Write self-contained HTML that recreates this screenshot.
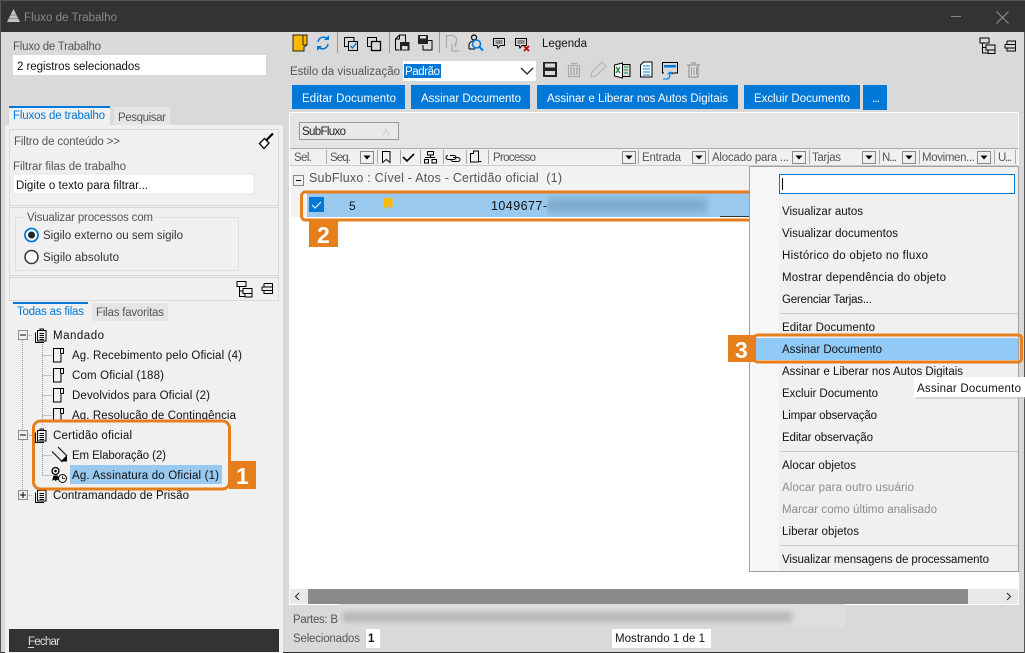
<!DOCTYPE html>
<html lang="pt"><head><meta charset="utf-8"><title>Fluxo de Trabalho</title>
<style>
html,body{margin:0;padding:0;background:#d9d9d9;overflow:hidden}
svg{display:block}
text{font-family:"Liberation Sans",sans-serif;font-size:11.5px;fill:#111;white-space:pre}
.g{fill:#555}.b{fill:#0078d7}.w{fill:#fff}.d{fill:#8c8c8c}
.i{fill:none;stroke:#000;stroke-width:1}
.dot{stroke:#999;stroke-dasharray:1 1;stroke-width:1;fill:none}
.sep{stroke:#aaa;stroke-width:1}
.dd{fill:#f0f0f0;stroke:#888;stroke-width:1}
.o{fill:none;stroke:#e67e1c;stroke-width:3}
.n{font-size:23px;font-weight:bold;fill:#fff}
</style></head><body>
<svg width="1025" height="653" viewBox="0 0 1025 653" xmlns="http://www.w3.org/2000/svg">
<defs>
<filter id="bl" x="-5%" y="-60%" width="110%" height="220%"><feGaussianBlur stdDeviation="3.5"/></filter>
<clipPath id="rowc"><rect x="547" y="193" width="173" height="24"/></clipPath>
<clipPath id="footc"><rect x="339" y="604" width="506" height="23"/></clipPath>
<g id="clip"><path class="i" d="M2.500 2.500h8.500v10.500h-8.500zM5 2.500v-1.500h3.500v1.500M4.500 5.500h4.500M4.500 7.500h4.500M4.500 9.500h4.500M4.500 11.500h4.500M.5 4.500v10h8.500"/></g>
<g id="page"><path class="i" d="M.5.5h10v5h-2.500v8.500h-7.500zM7.500 .5v5"/></g>
<g id="tree"><path class="i" d="M.5.5h9v5h-9zM3 5.500v10.500M3 10h4M3 15.500h5M6.500 7.500h9v5h-9zM8.500 12.500v3.500h7v-3.500"/></g>
<g id="coll"><path class="i" d="M2.500.5h8.500v10h-8.500v-3M.5 4h10.500M.5 4v3.500h10.500M2.500 .5v3.500"/></g>
<g id="dda"><path d="M0 0h7l-3.500 4z" fill="#000"/></g>
</defs>

<rect width="1025" height="653" fill="#d9d9d9"/>
<rect width="1025" height="32" fill="#333"/>
<rect width="1025" height="1" fill="#555"/>
<rect y="652" width="1025" height="1" fill="#333"/>
<rect width="1" height="653" fill="#555"/><rect x="1024" y="32" width="1" height="621" fill="#555"/>

<!-- title -->
<path d="M13.500 9l6.500 13h-13z" fill="#c4c4c4"/><path d="M9 18.500h9M10.500 15h6" stroke="#555" stroke-width=".5" fill="none"/>
<text x="24" y="21" textLength="93" style="fill:#8a8a8a">Fluxo de Trabalho</text>
<rect x="951" y="16" width="10" height="1" fill="#888"/>
<path d="M996.500 11.500l12 12M1008.500 11.500l-12 12" stroke="#888" stroke-width="1.200"/>

<!-- left top -->
<text class="g" x="13" y="50" textLength="88">Fluxo de Trabalho</text>
<rect x="13" y="55" width="253" height="20" fill="#fff"/>
<text x="17" y="70" textLength="123">2 registros selecionados</text>

<!-- left tabs -->
<rect x="5" y="125" width="278" height="528" fill="#f0f0f0"/>
<rect x="9" y="106" width="101" height="19" fill="#f0f0f0"/>
<rect x="9" y="106" width="101" height="2" fill="#0078d7"/>
<text class="b" x="13" y="119" textLength="92">Fluxos de trabalho</text>
<rect x="114" y="107" width="56" height="18" fill="#e5e5e5"/>
<text class="g" x="118" y="121" textLength="48">Pesquisar</text>

<rect x="9.500" y="129.500" width="269" height="76" fill="none" stroke="#d9d9d9"/>
<text class="g" x="14" y="145" textLength="106">Filtro de conteúdo &gt;&gt;</text>
<path d="M259.500 143.500l5-5 4.500 4.500-5 5.500z" fill="#fff" stroke="#000" stroke-width="1.300"/>
<path d="M266 140.500l7-7" stroke="#000" stroke-width="2.200"/>
<text class="g" x="13" y="170" textLength="113">Filtrar filas de trabalho</text>
<rect x="13" y="174" width="241" height="20" fill="#fff" stroke="#e6e6e6"/>
<text x="16" y="189" textLength="132">Digite o texto para filtrar...</text>

<rect x="9.500" y="207.500" width="269" height="68" fill="none" stroke="#d9d9d9"/>
<rect x="15.500" y="217.500" width="223" height="53" fill="none" stroke="#e0e0e0"/>
<rect x="25" y="212" width="130" height="10" fill="#f0f0f0"/>
<text class="g" x="27" y="221" textLength="126">Visualizar processos com</text>
<circle cx="31.500" cy="235" r="6.500" fill="#fff" stroke="#0078d7" stroke-width="1.800"/>
<circle cx="31.500" cy="235" r="3.500" fill="#222"/>
<text x="43" y="239" textLength="140" style="fill:#333">Sigilo externo ou sem sigilo</text>
<circle cx="31.500" cy="257" r="6.500" fill="#fff" stroke="#333" stroke-width="1.500"/>
<text x="43" y="261" textLength="76" style="fill:#333">Sigilo absoluto</text>

<rect x="9.500" y="277.500" width="269" height="23" fill="none" stroke="#d9d9d9"/>
<use href="#tree" x="236.500" y="281"/>
<use href="#coll" x="261.500" y="283"/>

<rect x="13" y="302" width="75" height="2" fill="#0078d7"/>
<text class="b" x="17" y="315" textLength="67">Todas as filas</text>
<rect x="92" y="303" width="76" height="18" fill="#e5e5e5"/>
<text class="g" x="96" y="316" textLength="68">Filas favoritas</text>

<!-- tree -->
<path class="dot" d="M22.500 340v150M42.500 340v85M42.500 440v35M42.500 355.500h9M42.500 375.500h9M42.500 395.500h9M42.500 415.500h9M42.500 455.500h9M42.500 475.500h9M27 335.500h6M27 435.500h6M27 495.500h6"/>
<rect x="18.500" y="330.500" width="9" height="9" fill="#f0f0f0" stroke="#888"/><path d="M20 335h6" stroke="#000"/>
<use href="#clip" x="35" y="328"/>
<text x="53" y="339" textLength="51">Mandado</text>
<use href="#page" x="53" y="348"/><text x="72" y="359" textLength="170">Ag. Recebimento pelo Oficial (4)</text>
<use href="#page" x="53" y="368"/><text x="72" y="379" textLength="92">Com Oficial (188)</text>
<use href="#page" x="53" y="388"/><text x="72" y="399" textLength="138">Devolvidos para Oficial (2)</text>
<use href="#page" x="53" y="408"/><text x="72" y="419" textLength="164">Ag. Resolução de Contingência</text>

<rect x="18.500" y="430.500" width="9" height="9" fill="#f0f0f0" stroke="#888"/><path d="M20 435h6" stroke="#000"/>
<use href="#clip" x="35" y="428"/>
<text x="53" y="439" textLength="79">Certidão oficial</text>
<path d="M52 451.500l10.500 10.500M58 447l9 9" fill="none" stroke="#000" stroke-width="1"/><path d="M60.500 461.500l6.500-6.500v6.500z" fill="#000"/>
<text x="72" y="459" textLength="94">Em Elaboração (2)</text>
<circle cx="55.500" cy="471" r="3.500" fill="none" stroke="#000" stroke-width="1.300"/><circle cx="55.500" cy="471" r="1.300"/><path d="M52 481l1.500-5.500h4l2 5.500-2-1.500-2 1.500-1.500-1.500z" fill="#000"/>
<circle cx="62.500" cy="478.500" r="4" fill="#f0f0f0" stroke="#000"/><path d="M62.500 476v2.500h2.500" fill="none" stroke="#000" stroke-width=".8"/>
<rect x="70" y="465" width="152" height="19" fill="#99c9ef"/>
<text x="72" y="479" textLength="147">Ag. Assinatura do Oficial (1)</text>

<rect x="18.500" y="490.500" width="9" height="9" fill="#f0f0f0" stroke="#888"/><path d="M20 495h6M23 492v6" stroke="#000"/>
<use href="#clip" x="35" y="488"/>
<text x="53" y="499" textLength="136">Contramandado de Prisão</text>

<rect x="33.500" y="421" width="196" height="68" rx="7" class="o"/>
<rect x="229" y="461" width="27" height="28" fill="#e67e1c"/>
<text class="n" x="236" y="484">1</text>

<rect x="9" y="629" width="270" height="23" fill="#333"/>
<text x="28" y="645" textLength="32" style="fill:#ddd">Fechar</text><rect x="28" y="647" width="6" height="1" fill="#ddd"/>

<!-- toolbar -->
<path d="M293 35h14v10l-3 2v4h-11z" fill="#fdb900" stroke="#222"/>
<path d="M303 35v10h4" fill="none" stroke="#222"/>
<path d="M318 42a5.500 5.500 0 0 1 9-3.500M328 44a5.500 5.500 0 0 1-9 3.500" fill="none" stroke="#0078d7" stroke-width="1.500"/>
<path d="M329 35v5h-5zM317 51v-5h5z" fill="#0078d7"/>
<rect x="337" y="32" width="1" height="21" fill="#999"/>
<path class="i" d="M344.500 37.500h9.500v4M348 46.500h-3.500v-9"/>
<rect x="348.500" y="41.500" width="9" height="9" fill="none" stroke="#000"/>
<path d="M350.500 46l2 2 4-5" fill="none" stroke="#0078d7" stroke-width="1.400"/>
<path class="i" d="M371.500 46.500h-4v-9h9v4"/><rect x="371.500" y="41.500" width="9" height="9" fill="none" stroke="#000" stroke-width="1.300"/>
<rect x="389" y="32" width="1" height="21" fill="#999"/>
<path class="i" d="M395.500 50v-11l4-4h6v7M399.500 35v4h-4M395.500 50h4" stroke-width="1.100"/><rect x="400" y="42" width="9.500" height="8.500" fill="#222"/><rect x="402" y="46" width="5.500" height="3.500" fill="#ddd"/>
<path class="i" d="M428 40.500h4v9.500h-9v-5" stroke-width="1.100"/><rect x="418" y="35" width="10" height="9" fill="#222"/><rect x="420" y="36" width="6" height="2.500" fill="#ddd"/>
<rect x="439" y="32" width="1" height="21" fill="#999"/>
<path d="M446.500 47.500v-12h7l3 3v5M452 44v7h7M455.500 47v-5" fill="none" stroke="#aaa" stroke-width="1.200"/>
<circle cx="474" cy="37.500" r="2.500" fill="none" stroke="#000" stroke-width="1.200"/><path class="i" d="M469 49v-4a5 4 0 0 1 5-4M469 49h6"/>
<circle cx="476.500" cy="44" r="4" fill="#d9d9d9" stroke="#0078d7" stroke-width="1.500"/><path d="M479.500 47l3.500 3.500" stroke="#0078d7" stroke-width="2"/>
<path class="i" d="M493.500 38.500h11v7h-4.500l-2 2.500-1-2.500h-3.500z"/><path d="M495.500 41h7M495.500 43h7" stroke="#000" stroke-width=".8"/>
<path class="i" d="M515.500 38.500h11v7h-4.500l-2 2.500-1-2.500h-3.500z"/><path d="M517.500 41h7M517.500 43h7" stroke="#000" stroke-width=".8"/>
<path d="M524 46l5 5M529 46l-5 5" stroke="#c00" stroke-width="1.800"/>
<text x="542" y="47" textLength="45">Legenda</text>

<use href="#tree" x="979.500" y="37.500"/>
<use href="#coll" x="1004.500" y="40.500"/>

<!-- style row -->
<text class="g" x="290" y="75" textLength="110">Estilo da visualização</text>
<rect x="403" y="61" width="133" height="20" fill="#fff"/>
<rect x="404" y="64" width="37" height="14" fill="#0078d7"/>
<text class="w" x="405" y="75" textLength="35">Padrão</text>
<path d="M521 68l6 6 6-6" fill="none" stroke="#222" stroke-width="1.300"/>
<rect x="543" y="62" width="14" height="15" fill="#222"/><rect x="545" y="63.500" width="10" height="4" fill="#d9d9d9"/><rect x="545" y="71" width="10" height="4" fill="#d9d9d9"/>
<path d="M568.500 65.500h11v11h-11zM571 63.500h6" fill="none" stroke="#aaa" stroke-width="1.200"/><path d="M571 67v8M574 67v8M577 67v8" stroke="#aaa" stroke-width="1.500"/>
<path d="M592 72l10-10 4 4-10 10-5 1z" fill="none" stroke="#b5b5b5" stroke-width="1.200"/>
<path class="i" d="M622 64.500h8v12h-8"/><path d="M624 67h4M624 70h4M624 73h4" stroke="#1a8f3c"/>
<path d="M614.500 65l8-2v15l-8-2z" fill="#fff" stroke="#000"/><path d="M616 67l4 6M620 67l-4 6" stroke="#1a8f3c" stroke-width="1.400"/>
<path d="M640.500 65l3-3h8.500v15h-11.500z" fill="#fff" stroke="#000"/><path d="M643 66h7M643 69h7M643 72h7M643 75h7" stroke="#0078d7"/>
<path class="i" d="M664 73h-1.500v-10.500h15v10.500h-8"/><rect x="664" y="65" width="12" height="2.500" fill="#0078d7"/><path d="M663 79h4c2 0 3-2 3-6M667.500 74.500l2.500-2.500 2.500 2.500" fill="none" stroke="#0078d7" stroke-width="1.100"/>
<path d="M687 65h13M689 65v12h9v-12M691 63h5" fill="#e0e0e0" stroke="#999" stroke-width="1.300"/><path d="M691.500 67v8M694 67v8M696.500 67v8" stroke="#999"/>

<!-- action buttons -->
<g fill="#0078d7"><rect x="292" y="85" width="113" height="24"/><rect x="411" y="85" width="119" height="24"/><rect x="537" y="85" width="201" height="24"/><rect x="744" y="85" width="116" height="24"/><rect x="863" y="85" width="24" height="25"/></g>
<text class="w" x="302" y="102" textLength="94">Editar Documento</text>
<text class="w" x="421" y="102" textLength="100">Assinar Documento</text>
<text class="w" x="547" y="102" textLength="181">Assinar e Liberar nos Autos Digitais</text>
<text class="w" x="754" y="102" textLength="96">Excluir Documento</text>
<text class="w" x="872" y="102" textLength="8">...</text>

<!-- grid -->
<rect x="289" y="112" width="730" height="493" fill="#fff"/>
<rect x="290" y="113" width="728" height="35" fill="#e5e5e3"/>
<rect x="299.500" y="122.500" width="99" height="17" fill="#e9e9e7" stroke="#999"/>
<text x="302" y="135" textLength="44" style="fill:#222">SubFluxo</text>
<path d="M383 135l3-5 3 5" fill="none" stroke="#ccc"/>
<rect x="290" y="148" width="728" height="1" fill="#aaa"/>
<rect x="290" y="149" width="728" height="16" fill="#f0f0f0"/>
<rect x="290" y="165" width="728" height="1" fill="#ccc"/>
<path class="sep" d="M326.500 150v14M377.500 150v14M400.500 150v14M420.500 150v14M443.500 150v14M466.500 150v14M488.500 150v14M638.500 150v14M708.500 150v14M809.500 150v14M879.500 150v14M919.500 150v14M994.500 150v14M1015.500 150v14"/>
<text class="g" x="294" y="161" textLength="18">Sel.</text>
<text class="g" x="330" y="161" textLength="21">Seq.</text>
<text class="g" x="493" y="161" textLength="43">Processo</text>
<text class="g" x="642" y="161" textLength="39">Entrada</text>
<text class="g" x="712" y="161" textLength="77">Alocado para ...</text>
<text class="g" x="812" y="161" textLength="29">Tarjas</text>
<text class="g" x="882" y="161" textLength="15">N...</text>
<text class="g" x="922" y="161" textLength="53">Movimen...</text>
<text class="g" x="998" y="161" textLength="14">U...</text>
<g>
<rect class="dd" x="360.500" y="151.500" width="13" height="12"/><use href="#dda" x="363.500" y="155.500"/>
<rect class="dd" x="622.500" y="151.500" width="13" height="12"/><use href="#dda" x="625.500" y="155.500"/>
<rect class="dd" x="692.500" y="151.500" width="13" height="12"/><use href="#dda" x="695.500" y="155.500"/>
<rect class="dd" x="792.500" y="151.500" width="13" height="12"/><use href="#dda" x="795.500" y="155.500"/>
<rect class="dd" x="862.500" y="151.500" width="13" height="12"/><use href="#dda" x="865.500" y="155.500"/>
<rect class="dd" x="902.500" y="151.500" width="13" height="12"/><use href="#dda" x="905.500" y="155.500"/>
<rect class="dd" x="977.500" y="151.500" width="13" height="12"/><use href="#dda" x="980.500" y="155.500"/>
</g>
<path class="i" d="M382.500 151.500h7.500v11l-3.750-3-3.750 3z"/>
<path d="M403 157l4 4 7-7" fill="none" stroke="#000" stroke-width="1.600"/>
<path class="i" d="M427.500 151.500h6v3.500h-6zM430.500 155v2.500M425 157.500h10M424.500 159.500h4v3.500h-4zM432 159.500h4.500v3.500h-4.500z"/>
<path class="i" d="M450 155.500h4a2 2 0 0 1 0 4h-6a2 2 0 0 1 0-4M453 157.500h5a2 2 0 0 1 0 4h-5a2 2 0 0 1-2-2"/>
<path class="i" d="M470.500 153.500h3v-2.500h5v11h-8zM478.500 161.500h3"/>

<rect x="291" y="166" width="458" height="51" fill="#f2f2f2"/>
<rect x="293.500" y="175.500" width="10" height="10" fill="#f0f0f0" stroke="#888"/><path d="M296 180.500h5" stroke="#000"/>
<text class="g" x="309" y="182" textLength="253" style="font-size:12.500px">SubFluxo : Cível - Atos - Certidão oficial  (1)</text>
<rect x="307" y="193" width="443" height="24" fill="#99c9ef"/>
<rect x="307" y="217" width="443" height="1" fill="#fff"/>
<rect x="309" y="197" width="15" height="15" fill="#0078d7"/>
<path d="M312 205l3 3 6-6" fill="none" stroke="#fff" stroke-width="1.100"/>
<text x="349" y="210" style="font-size:12px">5</text>
<path d="M384 198h8.500v11l-4.250-3-4.250 3z" fill="#fdb900"/>
<text x="491" y="210" textLength="56" style="font-size:12.500px">1049677-</text>
<g clip-path="url(#rowc)"><g filter="url(#bl)"><rect x="547" y="198" width="160" height="15" fill="#7fabcd"/></g></g>
<rect x="720" y="216" width="29" height="1" fill="#333"/>
<rect x="301.500" y="192" width="452" height="28" rx="4" class="o"/>
<rect x="309" y="220" width="29" height="27" fill="#e67e1c"/>
<text class="n" x="317" y="243">2</text>

<!-- scrollbar -->
<rect x="290" y="589" width="728" height="15" fill="#e8e8e8"/>
<rect x="308" y="589" width="660" height="15" fill="#8a8a8a"/>
<path d="M299 593l-3.500 3.500 3.500 3.500M1007 593l3.500 3.500-3.500 3.500" fill="none" stroke="#222"/>

<!-- context menu -->
<rect x="749.500" y="166.500" width="269" height="405" fill="#f6f6f6" stroke="#a0a0a0"/>
<rect x="779" y="167" width="239" height="404" fill="#f0f0f0"/>
<rect x="779.500" y="174.500" width="235" height="19" fill="#fff" stroke="#0078d7"/>
<rect x="782" y="178" width="1" height="12" fill="#000"/>
<text x="782" y="215" textLength="81">Visualizar autos</text>
<text x="782" y="237" textLength="116">Visualizar documentos</text>
<text x="782" y="259" textLength="146">Histórico do objeto no fluxo</text>
<text x="782" y="281" textLength="164">Mostrar dependência do objeto</text>
<text x="782" y="303" textLength="90">Gerenciar Tarjas...</text>
<rect x="780" y="313" width="238" height="1" fill="#ccc"/>
<text x="782" y="331" textLength="93">Editar Documento</text>
<rect x="756" y="338" width="262" height="22" fill="#91c9f7"/>
<text x="782" y="353" textLength="100">Assinar Documento</text>
<text x="782" y="375" textLength="181">Assinar e Liberar nos Autos Digitais</text>
<text x="782" y="397" textLength="96">Excluir Documento</text>
<text x="782" y="419" textLength="95">Limpar observação</text>
<text x="782" y="441" textLength="91">Editar observação</text>
<rect x="780" y="451" width="238" height="1" fill="#ccc"/>
<text x="782" y="469" textLength="74">Alocar objetos</text>
<text class="d" x="782" y="491" textLength="132">Alocar para outro usuário</text>
<text class="d" x="782" y="513" textLength="155">Marcar como último analisado</text>
<text x="782" y="535" textLength="77">Liberar objetos</text>
<rect x="780" y="545" width="238" height="1" fill="#ccc"/>
<text x="782" y="563" textLength="207">Visualizar mensagens de processamento</text>
<rect x="754.500" y="335" width="267" height="27" rx="3" class="o"/>
<rect x="728" y="335" width="26" height="27" fill="#e67e1c"/>
<text class="n" x="735" y="358">3</text>
<rect x="916" y="379" width="109" height="20" fill="#bbb" opacity=".5"/>
<rect x="914" y="377" width="111" height="20" fill="#fff"/>
<text x="917" y="392" textLength="104">Assinar Documento</text>

<!-- footer -->
<rect x="339" y="604" width="506" height="23" fill="#dedede"/>
<text class="g" x="293" y="623" textLength="45">Partes: B</text>
<g clip-path="url(#footc)"><g filter="url(#bl)"><rect x="342" y="612" width="450" height="10" fill="#b4b4b4"/></g></g>
<text class="g" x="293" y="642" textLength="67">Selecionados</text>
<rect x="366" y="629" width="14" height="19" fill="#fff"/>
<text x="368" y="642" style="font-weight:bold">1</text>
<rect x="612" y="629" width="99" height="19" fill="#fff"/>
<text x="615" y="642" textLength="90">Mostrando 1 de 1</text>
</svg>
</body></html>
